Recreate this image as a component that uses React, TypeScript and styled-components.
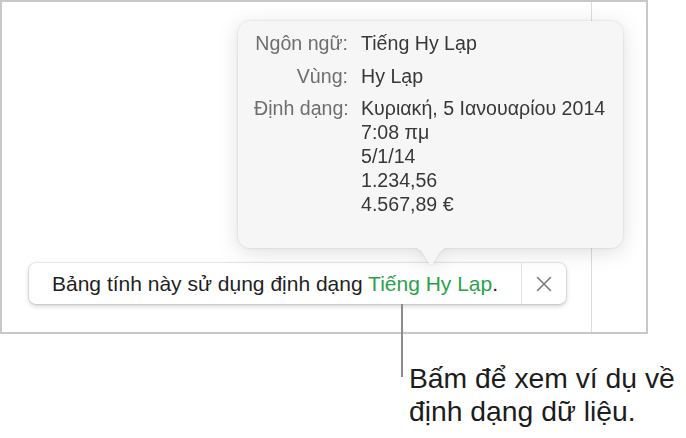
import { Fragment } from "react";
import styled, { createGlobalStyle } from "styled-components";

const GlobalStyle = createGlobalStyle`
  body {
    margin: 0;
    background: #ffffff;
    font-family: "Liberation Sans", Arial, sans-serif;
  }
`;

const Figure = styled.div`
  width: 686px;
  height: 438px;
  overflow: hidden;
`;

const Window = styled.div`
  position: relative;
  box-sizing: border-box;
  width: 648px;
  height: 334px;
  border: 2px solid #c8c8c8;
  display: grid;
  grid-template-columns: 1fr 55px;
`;

const Sheet = styled.div`
  display: flex;
  flex-direction: column;
  justify-content: flex-end;
  padding: 0 0 28px 27px;
`;

const SideColumn = styled.div`
  border-left: 1px solid #dcdcdc;
`;

const NoticeBar = styled.div`
  box-sizing: border-box;
  width: 537px;
  height: 41px;
  display: flex;
  background: #ffffff;
  border-radius: 7px;
  box-shadow: 0 0 0 1px rgba(0, 0, 0, 0.07), 0 2px 5px rgba(0, 0, 0, 0.2);
`;

const NoticeText = styled.div`
  flex: 1;
  padding-left: 23px;
  font-size: 21px;
  line-height: 41px;
  color: #1f1f1f;
  white-space: nowrap;
`;

const LangLink = styled.span`
  color: #29a34a;
`;

const CloseButton = styled.div`
  width: 44px;
  display: flex;
  align-items: center;
  justify-content: center;
  border-left: 1px solid #e4e4e4;
`;

const Popover = styled.div`
  position: absolute;
  left: 236px;
  top: 19px;
  filter: drop-shadow(0 0 1px rgba(0, 0, 0, 0.14))
    drop-shadow(0 4px 10px rgba(0, 0, 0, 0.13));
`;

const PopoverBody = styled.div`
  box-sizing: border-box;
  width: 385px;
  height: 227px;
  padding: 10px 16px 0 16px;
  background: #f6f6f6;
  border-radius: 12px;
  display: grid;
  grid-template-columns: 94px 1fr;
  column-gap: 13px;
  row-gap: 8.5px;
  align-content: start;
  font-size: 19.6px;
  line-height: 24px;
`;

const Label = styled.div`
  text-align: right;
  color: #6e6e6e;
  white-space: nowrap;
`;

const Value = styled.div`
  color: #383838;
  white-space: nowrap;
`;

const Arrow = styled.svg`
  position: absolute;
  left: 172px;
  top: 226px;
  display: block;
`;

const Callout = styled.div`
  position: relative;
  margin: 28px 0 0 409px;
  font-size: 28.3px;
  line-height: 33px;
  color: #1c1c1c;

  &::before {
    content: "";
    position: absolute;
    left: -8px;
    top: -58px;
    width: 2px;
    height: 73px;
    background: #8c8c8c;
  }
`;

const rows = [
  { label: "Ngôn ngữ:", values: ["Tiếng Hy Lạp"] },
  { label: "Vùng:", values: ["Hy Lạp"] },
  {
    label: "Định dạng:",
    values: [
      "Κυριακή, 5 Ιανουαρίου 2014",
      "7:08 πμ",
      "5/1/14",
      "1.234,56",
      "4.567,89 €",
    ],
  },
];

const App = () => (
  <>
    <GlobalStyle />
    <Figure>
      <Window>
        <Sheet>
          <NoticeBar>
            <NoticeText>
              Bảng tính này sử dụng định dạng <LangLink>Tiếng Hy Lạp</LangLink>.
            </NoticeText>
            <CloseButton>
              <svg width="16" height="16" viewBox="0 0 16 16">
                <path
                  d="M1.5 1.5 L14.5 14.5 M14.5 1.5 L1.5 14.5"
                  stroke="#7a7a7a"
                  strokeWidth="1.6"
                  strokeLinecap="round"
                />
              </svg>
            </CloseButton>
          </NoticeBar>
        </Sheet>
        <SideColumn />
        <Popover>
          <PopoverBody>
            {rows.map(row => (
              <Fragment key={row.label}>
                <Label>{row.label}</Label>
                <Value>
                  {row.values.map(v => (
                    <div key={v}>{v}</div>
                  ))}
                </Value>
              </Fragment>
            ))}
          </PopoverBody>
          <Arrow width="42" height="19" viewBox="0 0 42 19">
            <path
              d="M0 0 C6 0 9.5 2 12.5 6 L19 16.5 Q21 19 23 16.5 L29.5 6 C32.5 2 36 0 42 0 Z"
              fill="#f6f6f6"
            />
          </Arrow>
        </Popover>
      </Window>
      <Callout>
        Bấm để xem ví dụ về
        <br />
        định dạng dữ liệu.
      </Callout>
    </Figure>
  </>
);

export default App;
